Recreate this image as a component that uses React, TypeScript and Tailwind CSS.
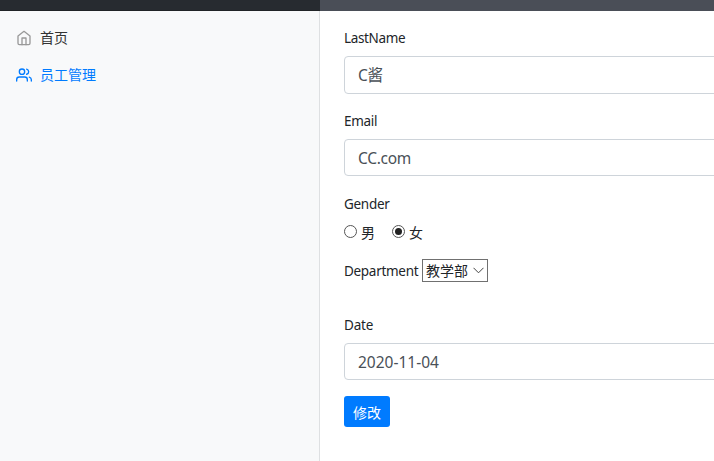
import type { ReactNode } from "react";

function Label({ children, className }: { children: string; className: string }) {
  return (
    <label
      className={`block h-[21px] shrink-0 pt-px font-['Noto_Sans',sans-serif] text-[13.5px] leading-[21px] whitespace-nowrap text-[#212529] ${className}`}
    >
      {children}
    </label>
  );
}

function Field({ children, className }: { children: ReactNode; className: string }) {
  return (
    <div
      className={`mt-2 flex w-[500px] items-center rounded border border-[#ced4da] bg-white pl-[13px] font-['Noto_Sans','Noto_Sans_CJK_SC',sans-serif] text-[15.5px] leading-[22px] text-[#495057] ${className}`}
    >
      {children}
    </div>
  );
}

function Radio({ label, checked }: { label: string; checked?: boolean }) {
  return (
    <label className="flex items-center gap-1">
      <span className="mb-[2px] flex size-[13px] items-center justify-center rounded-full border border-[#555] bg-white">
        {checked && <span className="size-[7px] rounded-full bg-[#222]" />}
      </span>
      <span className="leading-[21px]">{label}</span>
    </label>
  );
}

function Icon({ children, color }: { children: ReactNode; color: string }) {
  return (
    <svg
      width="16"
      height="16"
      viewBox="0 0 24 24"
      fill="none"
      stroke={color}
      strokeWidth="2"
      strokeLinecap="round"
      strokeLinejoin="round"
      className="mt-px shrink-0"
    >
      {children}
    </svg>
  );
}

export default function App() {
  return (
    <div className="flex h-[461px] w-[714px] flex-col overflow-hidden bg-white font-['Noto_Sans_CJK_SC',sans-serif] text-[14px] text-[#212529]">
      <header className="flex h-[11px] shrink-0">
        <div className="w-[320px] border-b border-[#202326] bg-[#272b30]" />
        <div className="flex-1 bg-[#4a4e57]" />
      </header>
      <div className="flex flex-1">
        <nav className="flex w-[320px] shrink-0 flex-col gap-4 border-r border-[#dee0e2] bg-[#f8f9fa] pt-4 pl-4">
          <a className="flex h-[21px] items-center gap-2 text-[#333]">
            <Icon color="#999">
              <path d="M3 9l9-7 9 7v11a2 2 0 0 1-2 2H5a2 2 0 0 1-2-2z" />
              <polyline points="9 22 9 12 15 12 15 22" />
            </Icon>
            <span>首页</span>
          </a>
          <a className="flex h-[21px] items-center gap-2 text-[#007bff]">
            <Icon color="#007bff">
              <path d="M17 21v-2a4 4 0 0 0-4-4H5a4 4 0 0 0-4 4v2" />
              <circle cx="9" cy="7" r="4" />
              <path d="M23 21v-2a4 4 0 0 0-3-3.87" />
              <path d="M16 3.13a4 4 0 0 1 0 7.75" />
            </Icon>
            <span>员工管理</span>
          </a>
        </nav>
        <main className="min-w-0 flex-1 overflow-hidden pt-4 pl-6">
          <Label className="tracking-[-0.35px]">LastName</Label>
          <Field className="h-[38px] tracking-[-0.4px]">C酱</Field>
          <Label className="mt-4 tracking-[-0.3px]">Email</Label>
          <Field className="h-[37px] tracking-[-0.3px]">CC.com</Field>
          <Label className="mt-[17px] tracking-[-0.3px]">Gender</Label>
          <div className="mt-2 flex h-[21px] items-center gap-[17px]">
            <Radio label="男" />
            <Radio label="女" checked />
          </div>
          <div className="mt-4 flex h-[23px] items-center">
            <Label className="w-[78px] tracking-[-0.3px]">Department</Label>
            <div className="flex h-[23px] w-[66px] shrink-0 items-center justify-between border border-[#707070] px-[3px]">
              <span className="leading-[21px]">教学部</span>
              <svg width="11" height="7" viewBox="0 0 11 7" fill="none" stroke="#444">
                <path d="M0.5 0.8 5.5 5.8 10.5 0.8" />
              </svg>
            </div>
          </div>
          <Label className="mt-8 tracking-[-0.2px]">Date</Label>
          <Field className="h-[37px]">2020-11-04</Field>
          <button className="mt-4 flex h-[31px] w-[46px] items-center justify-center rounded-[3px] bg-[#007bff] pt-[2px] text-white">
            修改
          </button>
        </main>
      </div>
    </div>
  );
}
